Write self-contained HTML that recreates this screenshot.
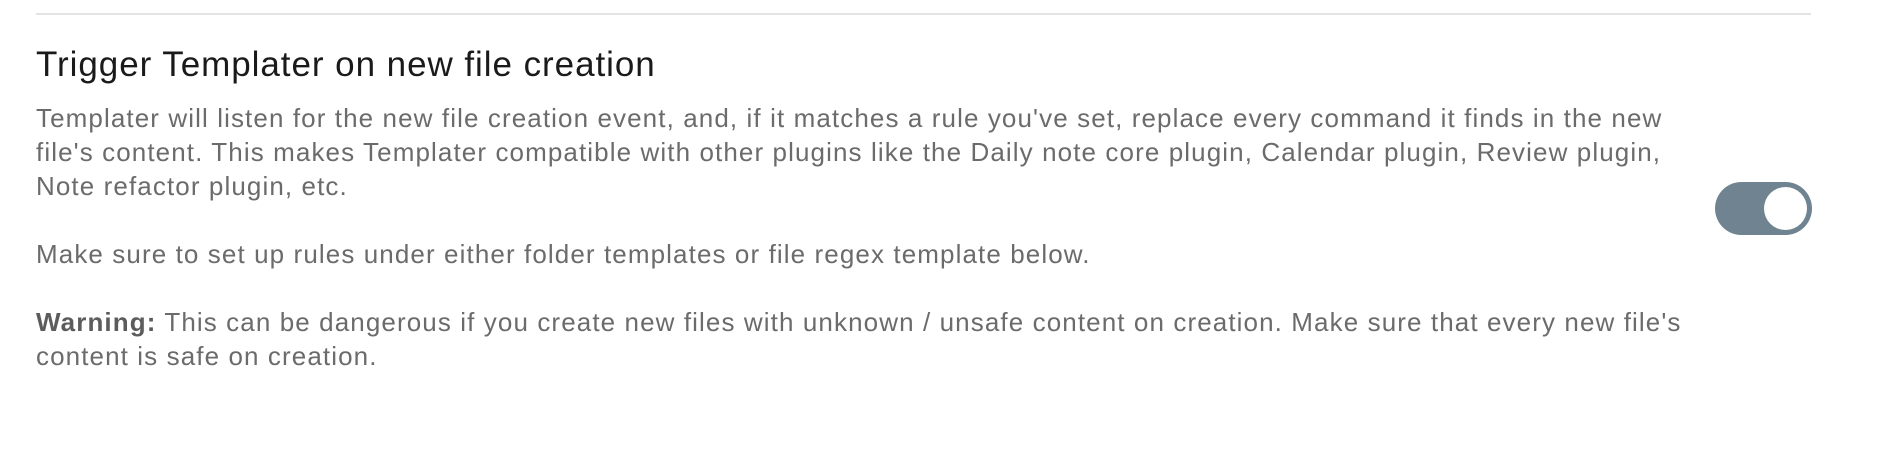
<!DOCTYPE html>
<html><head><meta charset="utf-8"><style>
html,body{margin:0;padding:0;background:#fff;width:1880px;height:460px;overflow:hidden;font-family:"Liberation Sans",Arial,sans-serif;}
.hr{position:absolute;left:36px;top:13px;width:1775px;height:2px;background:#e3e3e3;}
.h{position:absolute;left:36px;top:45px;font-size:35px;letter-spacing:0.95px;color:#1a1a1a;white-space:nowrap;}
.d{position:absolute;left:36px;top:101px;font-size:26px;line-height:34px;color:#6b6b6b;white-space:nowrap;letter-spacing:1.1px;}
.d b{color:#5c5c5c;}
.t{position:absolute;left:1715px;top:182px;width:97px;height:53px;border-radius:27px;background:#6f8391;}
.k{position:absolute;right:5px;top:5px;width:43px;height:43px;border-radius:50%;background:#fff;}
</style></head><body>
<div class="hr"></div>
<div class="h">Trigger Templater on new file creation</div>
<div class="d">Templater will listen for the new file creation event, and, if it matches a rule you've set, replace every command it finds in the new<br>file's content. This makes Templater compatible with other plugins like the Daily note core plugin, Calendar plugin, Review plugin,<br>Note refactor plugin, etc.<br><br>Make sure to set up rules under either folder templates or file regex template below.<br><br><b>Warning:</b> This can be dangerous if you create new files with unknown / unsafe content on creation. Make sure that every new file's<br>content is safe on creation.</div>
<div class="t"><div class="k"></div></div>
</body></html>
